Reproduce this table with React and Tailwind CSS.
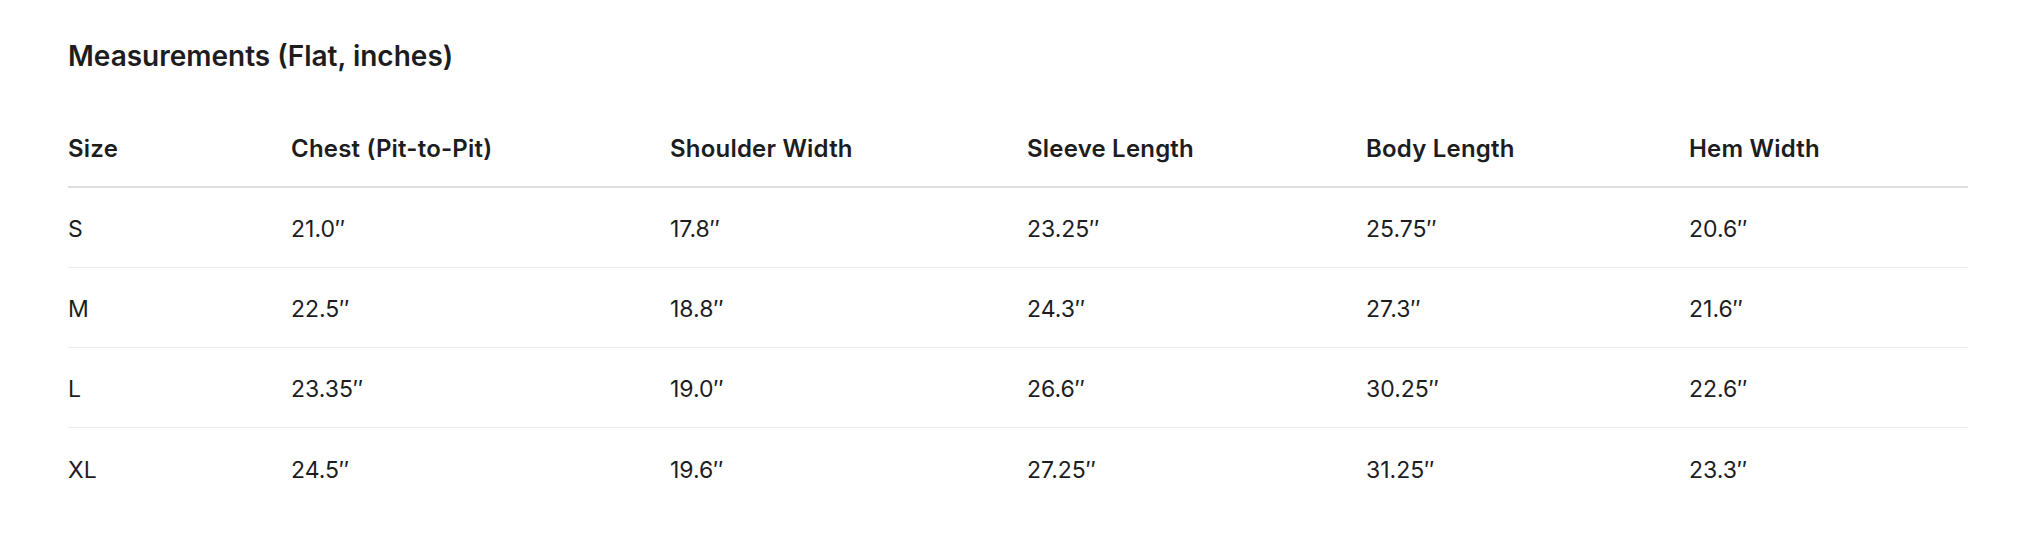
const columns = [
  "Size",
  "Chest (Pit-to-Pit)",
  "Shoulder Width",
  "Sleeve Length",
  "Body Length",
  "Hem Width",
];

const rows = [
  ["S", "21.0″", "17.8″", "23.25″", "25.75″", "20.6″"],
  ["M", "22.5″", "18.8″", "24.3″", "27.3″", "21.6″"],
  ["L", "23.35″", "19.0″", "26.6″", "30.25″", "22.6″"],
  ["XL", "24.5″", "19.6″", "27.25″", "31.25″", "23.3″"],
];

const gridCols =
  "grid grid-cols-[223px_379px_357px_339px_323px_1fr] items-center";

export default function App() {
  return (
    <div
      className="min-h-screen bg-white pt-[40px] pl-[68px] pr-[62px] text-[#1d1d1f]"
      style={{ fontFamily: "Inter, 'Noto Sans', sans-serif" }}
    >
      <h2 className="text-[28px] leading-[32px] font-semibold">
        Measurements (Flat, inches)
      </h2>

      <div className="mt-[36px]">
        {/* header */}
        <div
          className={`${gridCols} h-[80px] pt-[4px] border-b-2 border-[#dedede] text-[24px] font-semibold tracking-[0.2px]`}
        >
          {columns.map((c) => (
            <div key={c}>{c}</div>
          ))}
        </div>

        {rows.map((r) => (
          <div
            key={r[0]}
            className={`${gridCols} h-[80px] pt-[4px] border-b border-[#ebebeb] last:border-b-0 text-[23px]`}
          >
            {r.map((v, i) => (
              <div key={i}>{v}</div>
            ))}
          </div>
        ))}
      </div>
    </div>
  );
}
